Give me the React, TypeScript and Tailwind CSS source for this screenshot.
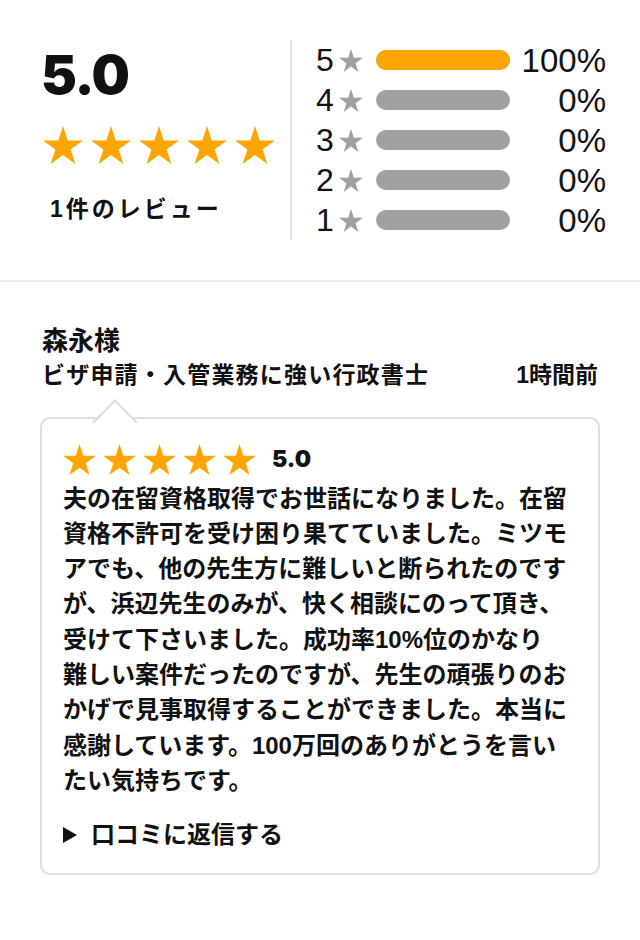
const ORANGE = '#ffa500';

function Star({ className, color }: { className: string; color: string }) {
  return (
    <svg className={className} viewBox="0 0 24 22.83" fill={color}>
      <polygon points="12,0 14.83,8.72 24,8.72 16.58,14.11 19.42,22.83 12,17.44 4.58,22.83 7.42,14.11 0,8.72 9.17,8.72" />
    </svg>
  );
}

const bars = [
  { label: '5', pct: 100 },
  { label: '4', pct: 0 },
  { label: '3', pct: 0 },
  { label: '2', pct: 0 },
  { label: '1', pct: 0 },
];

const body = [
  '夫の在留資格取得でお世話になりました。在留',
  '資格不許可を受け困り果てていました。ミツモ',
  'アでも、他の先生方に難しいと断られたのです',
  'が、浜辺先生のみが、快く相談にのって頂き、',
  '受けて下さいました。成功率10%位のかなり',
  '難しい案件だったのですが、先生の頑張りのお',
  'かげで見事取得することができました。本当に',
  '感謝しています。100万回のありがとうを言い',
  'たい気持ちです。',
];

export default function App() {
  return (
    <div
      className="w-[640px] min-h-[940px] bg-white text-[#111]"
      style={{ fontFamily: '"Liberation Sans", "Noto Sans CJK JP", sans-serif' }}
    >
      {/* summary */}
      <div className="flex pt-10 pb-10 border-b-2 border-[#eeeeee]">
        <div className="w-[290px] pl-[41px] flex flex-col">
          <div className="text-[54px] leading-[60px] font-black tracking-tight mt-[5px]" style={{ fontFamily: 'Inter, sans-serif' }}>
            5.0
          </div>
          <div className="flex gap-2 mt-[21px] ml-[2px]">
            {[0, 1, 2, 3, 4].map((i) => (
              <Star key={i} className="w-10 h-[38px]" color={ORANGE} />
            ))}
          </div>
          <div className="mt-[30px] ml-[9px] text-[23px] leading-[30px] font-bold tracking-[3px]">1件のレビュー</div>
        </div>
        <div className="border-l-2 border-[#e0e0e0] pl-[24px] flex flex-col">
          {bars.map((b) => (
            <div key={b.label} className="h-10 flex items-center">
              <span className="w-[18px] text-[32px] leading-none">{b.label}</span>
              <Star className="w-6 h-[23px] ml-[5px]" color="#a0a0a0" />
              <div className="ml-[13px] w-[134px] h-5 rounded-full bg-[#a0a0a0] overflow-hidden">
                <div className="h-full rounded-full" style={{ width: `${b.pct}%`, background: ORANGE }} />
              </div>
              <span className="w-[96px] text-right text-[33px] leading-none">{b.pct}%</span>
            </div>
          ))}
        </div>
      </div>

      {/* review */}
      <div className="pt-[42px] px-[40px]">
        <div className="pl-[2px] text-[26px] leading-[34px] font-bold">森永様</div>
        <div className="flex justify-between items-center pl-[2px] pr-[2px] text-[23px] leading-[34px] font-bold tracking-[1.2px]">
          <span>ビザ申請・入管業務に強い行政書士</span>
          <span className="tracking-normal">1時間前</span>
        </div>

        <div className="relative mt-[25px] border-2 border-[#dddddd] rounded-[10px] px-[21px] pt-[23px] pb-[21px]">
          <div className="absolute -top-[13px] left-[57px] w-[32px] h-[32px] bg-white border-t-2 border-l-2 border-[#dddddd] rotate-45 origin-center" />
          <div className="relative flex items-center">
            <div className="flex gap-[7px]">
              {[0, 1, 2, 3, 4].map((i) => (
                <Star key={i} className="w-[33px] h-[31px]" color={ORANGE} />
              ))}
            </div>
            <span className="ml-[16px] text-[23px] font-black" style={{ fontFamily: 'Inter, sans-serif' }}>5.0</span>
          </div>
          <div className="mt-[4px] text-[24px] leading-[35.3px] font-bold">
            {body.map((l, i) => (
              <div key={i} className="whitespace-nowrap">{l}</div>
            ))}
          </div>
          <div className="mt-[19px] flex items-center text-[24px] leading-[35px] font-bold">
            <svg className="w-[14px] h-[16px]" viewBox="0 0 14 16" fill="#111">
              <polygon points="0,0 14,8 0,16" />
            </svg>
            <span className="ml-[14px]">口コミに返信する</span>
          </div>
        </div>
      </div>
    </div>
  );
}
